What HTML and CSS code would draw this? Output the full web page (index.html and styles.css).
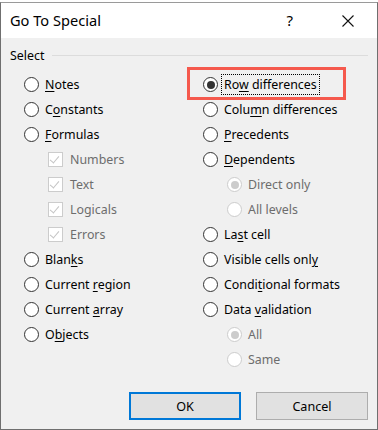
FILE: index.html
```html
<!DOCTYPE html>
<html lang="en">
<head>
    <meta charset="UTF-8">
    <title>Go To Special</title>
    <link rel="stylesheet" href="styles.css">
</head>
<body>
    <div class="dialog">
        <div class="titlebar">
            <span class="title">Go To Special</span>
            <span class="help">?</span>
            <svg class="close" width="12" height="12" viewBox="0 0 12 12">
                <path d="M0.5 0.5 L11.5 11.5 M11.5 0.5 L0.5 11.5" stroke="#111" stroke-width="1.1"/>
            </svg>
        </div>

        <div class="content">
            <div class="group">
                <span class="legend">Select</span>
                <span class="rule"></span>
            </div>

            <div class="columns">
                <div class="col">
                    <div class="row"><span class="radio"></span><span><u>N</u>otes</span></div>
                    <div class="row"><span class="radio"></span><span>C<u>o</u>nstants</span></div>
                    <div class="row"><span class="radio"></span><span><u>F</u>ormulas</span></div>
                    <div class="row sub disabled"><span class="check"></span><span>Numbers</span></div>
                    <div class="row sub disabled"><span class="check"></span><span>Text</span></div>
                    <div class="row sub disabled"><span class="check"></span><span>Logicals</span></div>
                    <div class="row sub disabled"><span class="check"></span><span>Errors</span></div>
                    <div class="row"><span class="radio"></span><span>Blan<u>k</u>s</span></div>
                    <div class="row"><span class="radio"></span><span>Current <u>r</u>egion</span></div>
                    <div class="row"><span class="radio"></span><span>Current <u>a</u>rray</span></div>
                    <div class="row"><span class="radio"></span><span>O<u>b</u>jects</span></div>
                </div>
                <div class="col">
                    <div class="row"><span class="radio on"></span><span class="focus">Ro<u>w</u> differences</span><span class="highlight"></span></div>
                    <div class="row"><span class="radio"></span><span>Colu<u>m</u>n differences</span></div>
                    <div class="row"><span class="radio"></span><span><u>P</u>recedents</span></div>
                    <div class="row"><span class="radio"></span><span><u>D</u>ependents</span></div>
                    <div class="row sub disabled"><span class="radio dot"></span><span>Direct only</span></div>
                    <div class="row sub disabled"><span class="radio"></span><span>All levels</span></div>
                    <div class="row"><span class="radio"></span><span>La<u>s</u>t cell</span></div>
                    <div class="row"><span class="radio"></span><span>Visible cells onl<u>y</u></span></div>
                    <div class="row"><span class="radio"></span><span>Condi<u>t</u>ional formats</span></div>
                    <div class="row"><span class="radio"></span><span>Data <u>v</u>alidation</span></div>
                    <div class="row sub disabled"><span class="radio dot"></span><span>All</span></div>
                    <div class="row sub disabled"><span class="radio"></span><span>Same</span></div>
                </div>
            </div>

            <div class="buttons">
                <button class="btn default">OK</button>
                <button class="btn">Cancel</button>
            </div>
        </div>
    </div>
</body>
</html>
```

FILE: styles.css
```css
body {
    margin: 0;
    background: #ffffff;
    font-family: "Noto Sans", "Open Sans", sans-serif;
    font-size: 12.4px;
    color: #000;
}

.dialog {
    width: 376px;
    height: 426px;
    margin-top: 2px;
    border: 1px solid #6f6f6f;
    border-top-color: #9a9a9a;
    background: #f0f0f0;
    display: flex;
    flex-direction: column;
}

.titlebar {
    height: 35px;
    background: #fff;
    display: flex;
    align-items: center;
    padding: 0 0 0 9px;
}

.title {
    font-size: 14.6px;
    flex: 1;
    padding-bottom: 1px;
}

.help {
    font-size: 15px;
    margin-right: 49px;
    padding-bottom: 1px;
}

.close {
    margin-right: 23px;
}

.content {
    flex: 1;
    display: flex;
    flex-direction: column;
    padding: 8px 9px 0 9px;
}

.group {
    display: flex;
    align-items: center;
    height: 18px;
}

.rule {
    flex: 1;
    height: 1px;
    background: #dcdcdc;
    margin-left: 8px;
}

.columns {
    display: grid;
    grid-template-columns: 179px 1fr;
    padding-left: 14px;
    margin-top: 8px;
}

.row {
    height: 25px;
    display: flex;
    align-items: center;
    gap: 6px;
    position: relative;
}

.row.sub {
    padding-left: 24px;
}

.disabled {
    color: #6d6d6d;
}

.radio {
    width: 13px;
    height: 13px;
    border: 1px solid #333;
    border-radius: 50%;
    background: #fff;
    display: flex;
    align-items: center;
    justify-content: center;
    flex: none;
}

.radio.on::after {
    content: "";
    width: 8px;
    height: 8px;
    border-radius: 50%;
    background: #333;
}

.disabled .radio {
    border-color: #cccccc;
}

.radio.dot::after {
    content: "";
    width: 8px;
    height: 8px;
    border-radius: 50%;
    background: #cccccc;
}

.check {
    width: 13px;
    height: 13px;
    border: 1px solid #cccccc;
    background: #fff;
    position: relative;
    flex: none;
    margin-right: 1px;
}

.check::after {
    content: "";
    position: absolute;
    left: 3px;
    top: 1px;
    width: 4px;
    height: 8px;
    border: solid #c4c4c4;
    border-width: 0 1px 1px 0;
    transform: rotate(40deg);
}

.focus {
    outline: 1px dotted #000;
    outline-offset: 1px;
    padding: 0 1px;
    margin-left: -1px;
}

.highlight {
    position: absolute;
    left: -16px;
    top: -5px;
    width: 153px;
    height: 27px;
    border: 3px solid #f5594d;
}

u {
    text-underline-offset: 2px;
}

.buttons {
    display: flex;
    justify-content: flex-end;
    gap: 15px;
    margin-top: auto;
    padding-bottom: 9px;
}

.btn {
    width: 112px;
    height: 28px;
    font-family: inherit;
    font-size: 12.6px;
    background: #e1e1e1;
    border: 1px solid #adadad;
    color: #000;
    padding: 0;
}

.btn.default {
    border: 2px solid #0078d7;
}
```
